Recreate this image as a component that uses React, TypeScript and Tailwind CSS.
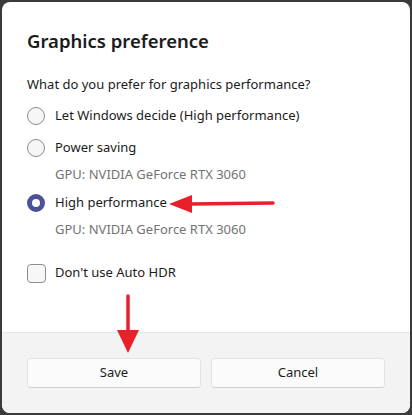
import React from "react";

const font = { fontFamily: '"Noto Sans", "Open Sans", sans-serif' };

function Radio({ checked }: { checked?: boolean }) {
  return checked ? (
    <div className="w-[18px] h-[18px] rounded-full border-[5px] border-[#4c5199] bg-white shrink-0" />
  ) : (
    <div className="w-[18px] h-[18px] rounded-full border border-[#8b8b8b] bg-[#f6f6f6] shrink-0" />
  );
}

export default function App() {
  return (
    <div className="w-[412px] h-[415px] bg-[#3b3b3b] p-[2px] pb-[2px]" style={font}>
      <div className="relative w-[408px] h-[411px] bg-white rounded-[8px] overflow-hidden flex flex-col">
        <div className="flex flex-col px-[25px] pt-[25px] flex-1 text-[#1b1b1b]">
          <div className="text-[18.5px] leading-[28px] font-semibold">Graphics preference</div>
          <div className="mt-[19px] text-[13px] leading-[20px]">What do you prefer for graphics performance?</div>
          <div className="mt-[6px] h-[32px] flex items-center gap-[10px] text-[13px]">
            <Radio />
            <span>Let Windows decide (High performance)</span>
          </div>
          <div className="h-[32px] flex items-center gap-[10px] text-[13px]">
            <Radio />
            <span>Power saving</span>
          </div>
          <div className="h-[20px] leading-[20px] pl-[28px] text-[13px] text-[#737373]">GPU: NVIDIA GeForce RTX 3060</div>
          <div className="mt-[3px] h-[32px] flex items-center gap-[10px] text-[13px]">
            <Radio checked />
            <span>High performance</span>
          </div>
          <div className="h-[20px] leading-[20px] pl-[28px] text-[13px] text-[#737373]">GPU: NVIDIA GeForce RTX 3060</div>
          <div className="mt-[18px] h-[32px] flex items-center gap-[9px] text-[13px]">
            <div className="w-[19px] h-[19px] rounded-[4px] border border-[#8e8e8e] bg-[#f7f7f7] shrink-0" />
            <span>Don't use Auto HDR</span>
          </div>
        </div>
        <div className="h-[81px] bg-[#f3f3f3] border-t border-[#e6e6e6] px-[25px] pt-[25px] flex gap-[10px]">
          <button className="w-[174px] h-[30px] rounded-[4px] bg-[#fbfbfb] border border-[#e3e3e3] border-b-[#cfcfcf] text-[13px] text-[#1b1b1b]">Save</button>
          <button className="w-[174px] h-[30px] rounded-[4px] bg-[#fbfbfb] border border-[#e3e3e3] border-b-[#cfcfcf] text-[13px] text-[#1b1b1b]">Cancel</button>
        </div>
        <svg className="absolute left-0 top-0 pointer-events-none" width="408" height="411" viewBox="2 2 408 411">
          <line x1="190" y1="204" x2="273" y2="203" stroke="#e8202a" strokeWidth="3.5" strokeLinecap="round" />
          <polygon points="169,204 192,195 192,213" fill="#e8202a" />
          <line x1="128" y1="296" x2="128" y2="334" stroke="#e8202a" strokeWidth="3.5" strokeLinecap="round" />
          <polygon points="117,330 139,330 128,353" fill="#e8202a" />
        </svg>
      </div>
    </div>
  );
}
